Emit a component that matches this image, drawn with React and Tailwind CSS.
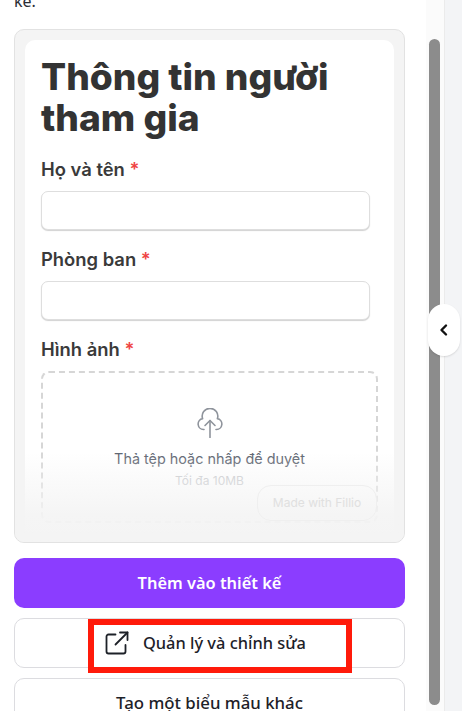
const Field = ({ label }) => (
  <div className="mb-[18px]">
    <label className="block text-[18.4px] leading-[22px] font-semibold text-[#3a3a3a] mb-[11px]">
      {label} <span className="text-[#ef4444]">*</span>
    </label>
    <div className="h-[39px] mr-[8px] bg-white border border-[#dedede] rounded-[7px] shadow-[0_1px_1px_rgba(0,0,0,0.18)]" />
  </div>
);

const CloudIcon = () => (
  <svg viewBox="0 0 26 30" className="w-[26px] h-[30px] mb-[12px]" fill="none" stroke="#8f949c" strokeWidth="1.6" strokeLinecap="round" strokeLinejoin="round">
    <path d="M7 21.5H6.5a5.5 5.5 0 0 1-.9-10.9 7.8 7.8 0 1 1 14.8 0 5.5 5.5 0 0 1-.9 10.9H19" />
    <path d="M13 29.5V12.5" />
    <path d="M8 17.5 13 12.5l5 5" />
  </svg>
);

const LinkIcon = () => (
  <svg viewBox="0 0 24 24" className="w-[24px] h-[24px]" fill="none" stroke="#1d2128" strokeWidth="1.8" strokeLinecap="round" strokeLinejoin="round">
    <path d="M10.5 3.5H3.5a2 2 0 0 0-2 2v15a2 2 0 0 0 2 2h15a2 2 0 0 0 2-2V14" />
    <path d="M10.5 13.5 22.5 1.5" />
    <path d="M15 1.5h7.5V9" />
  </svg>
);

const Preview = () => (
  <div className="relative h-[514px] bg-[#f4f4f4] border border-[#e2e2e2] rounded-[10px] p-[10px] overflow-hidden">
    <div className="h-full bg-white rounded-t-[10px] px-[16px] pt-[16px] [font-family:Inter,sans-serif]">
      <h1 className="text-[37.2px] leading-[41px] font-extrabold text-[#333333] mb-[20px]">Thông tin người tham gia</h1>
      <Field label="Họ và tên" />
      <Field label="Phòng ban" />
      <label className="block text-[18.4px] leading-[22px] font-semibold text-[#3a3a3a] mb-[11px]">
        Hình ảnh <span className="text-[#ef4444]">*</span>
      </label>
      <div className="h-[152px] border-2 border-dashed border-[#d6d6d6] rounded-[8px] flex flex-col items-center pt-[35px]">
        <CloudIcon />
        <div className="text-[14.4px] leading-[18px] text-[#5d6470]">Thả tệp hoặc nhấp để duyệt</div>
        <div className="text-[12px] leading-[16px] text-[#c4c6ca] mt-[5px]">Tối đa 10MB</div>
      </div>
    </div>
    <div className="absolute left-0 right-0 bottom-0 h-[90px] bg-gradient-to-b from-[#f4f4f400] via-[#f4f4f4e8] via-70% to-[#f4f4f4]" />
    <div className="absolute right-[27px] bottom-[21px] w-[120px] h-[36px] flex items-center justify-center rounded-[14px] border border-[#efefef] text-[12px] text-[#e0e0e0] [font-family:Inter,sans-serif]">
      Made with Fillio
    </div>
  </div>
);

const OutlineButton = ({ children }) => (
  <button className="h-[50px] w-full shrink-0 flex items-center justify-center rounded-[10px] border border-[#dcdce0] bg-white font-medium text-[#1d2128]">
    {children}
  </button>
);

export default function App() {
  return (
    <div className="relative flex h-[711px] w-[462px] overflow-hidden bg-white [font-family:'Noto_Sans',sans-serif]">
      <main className="w-[426px] shrink-0 mt-[-8px] pl-[14px] pr-[21px]">
        <p className="text-[16px] leading-[18px] text-[#2a2e35] mb-[19px]">kế.</p>
        <Preview />
        <div className="mt-[15px] flex flex-col gap-[10px]">
          <button className="h-[50px] w-full rounded-[10px] bg-[#8b3dff] text-[16.4px] font-semibold text-white">
            Thêm vào thiết kế
          </button>
          <OutlineButton>
            <span className="flex items-center gap-[14px] pr-[8px] text-[16.4px]">
              <LinkIcon />
              Quản lý và chỉnh sửa
            </span>
          </OutlineButton>
          <OutlineButton>
            <span className="text-[16.8px]">Tạo một biểu mẫu khác</span>
          </OutlineButton>
        </div>
      </main>
      <div className="relative w-[18px] shrink-0 bg-[#fbfbfb]">
        <div className="absolute left-[3px] top-[39px] h-[666px] w-[11px] rounded-full bg-[#8c8c8c]" />
      </div>
      <div className="flex-1 bg-[#f3f4f6] border-l border-[#ebebeb]" />
      <button className="absolute left-[428px] top-[304px] flex h-[52px] w-[32px] items-center justify-center rounded-[16px] bg-white shadow-[0_1px_2px_rgba(0,0,0,0.12)]">
        <svg viewBox="0 0 16 16" className="w-[16px] h-[16px]" fill="none" stroke="#111111" strokeWidth="2.4" strokeLinecap="round" strokeLinejoin="round">
          <path d="M10 3.5 5.5 8l4.5 4.5" />
        </svg>
      </button>
      <div className="absolute left-[88px] top-[619px] h-[54px] w-[264px] border-[6px] border-[#ff1a0a]" />
    </div>
  );
}
